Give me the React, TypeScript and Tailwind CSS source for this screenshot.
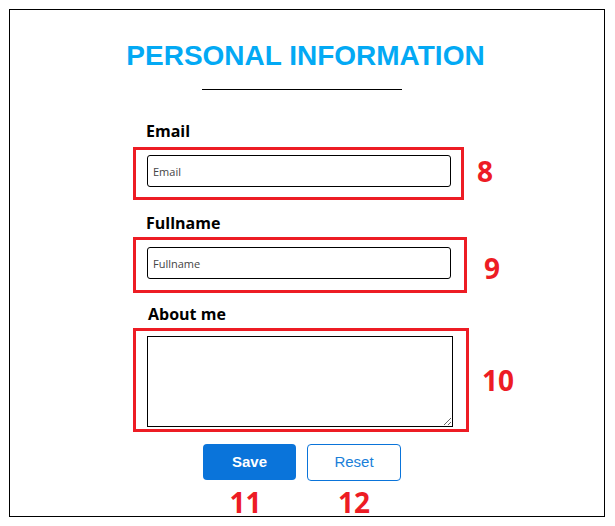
import React from "react";

const sans = { fontFamily: "'Open Sans', 'Noto Sans', sans-serif" };

function Field({
  label,
  num,
  boxW,
  boxH,
  gap,
  numPos,
  children,
  labelPad = "pl-[13px]",
}: {
  label: string;
  num: string;
  boxW: string;
  boxH: string;
  gap: string;
  numPos: string;
  children: React.ReactNode;
  labelPad?: string;
}) {
  return (
    <div className="flex flex-col">
      <div className={`${labelPad} text-[16px] font-bold leading-[22px] text-black`}>{label}</div>
      <div className={`${gap} flex items-center`}>
        <div className={`${boxW} ${boxH} border-[3px] border-[#ed1c24] pl-[11px] pt-[5px]`}>{children}</div>
        <span className={`${numPos} text-[28px] font-bold leading-none text-[#ed1c24]`}>{num}</span>
      </div>
    </div>
  );
}

export default function App() {
  return (
    <div className="w-[615px] h-[526px] bg-white pl-[9px] pt-[9px]" style={sans}>
      <div className="w-[596px] h-[508px] border border-black flex flex-col">
        <h1
          className="mt-[30px] pr-[3px] text-center text-[28px] font-bold leading-[32px] text-[#03a9f4]"
          style={{ fontFamily: "'Liberation Sans', Arial, sans-serif" }}
        >
          PERSONAL INFORMATION
        </h1>
        <div className="mt-[17px] ml-[192px] w-[200px] h-px bg-black" />

        <div className="mt-[30px] pl-[123px] flex flex-col">
          <Field label="Email" num="8" boxW="w-[331px]" boxH="h-[53px]" gap="mt-[5px]" numPos="ml-[13px] mt-[-6px]">
            <input
              placeholder="Email"
              className="w-[304px] h-[32px] border border-black rounded-[3px] px-[5px] text-[11px] text-black placeholder:text-[#444] outline-none"
            />
          </Field>
          <div className="h-[12px]" />
          <Field label="Fullname" num="9" boxW="w-[334px]" boxH="h-[56px]" gap="mt-[3px]" numPos="ml-[17px] mt-[6px]">
            <div className="pt-[2px]">
              <input
                placeholder="Fullname"
                className="w-[304px] h-[32px] border border-black rounded-[3px] px-[5px] text-[11px] text-black placeholder:text-[#444] outline-none"
              />
            </div>
          </Field>
          <div className="h-[10px]" />
          <Field
            label="About me"
            num="10"
            boxW="w-[336px]"
            boxH="h-[104px]"
            gap="mt-[3px]"
            numPos="ml-[13px] mt-0"
            labelPad="pl-[15px]"
          >
            <textarea className="block w-[306px] h-[91px] border border-black rounded-none outline-none resize-y p-1 text-[12px]" />
          </Field>
        </div>

        <div className="mt-[12px] ml-[193px] flex gap-[11px]" style={{ fontFamily: "'Liberation Sans', Arial, sans-serif" }}>
          <div className="flex flex-col items-center">
            <button className="w-[93px] h-[36px] rounded-[4px] bg-[#0a74da] text-white text-[15px] font-bold">
              Save
            </button>
            <span className="mt-[8px] mr-[8px] text-[28px] font-bold leading-[28px] text-[#ed1c24]" style={sans}>
              11
            </span>
          </div>
          <div className="flex flex-col items-center">
            <button className="w-[94px] h-[37px] rounded-[4px] border border-[#0a74da] bg-white text-[#1a7fd9] text-[15px]">
              Reset
            </button>
            <span className="mt-[7px] text-[28px] font-bold leading-[28px] text-[#ed1c24]" style={sans}>
              12
            </span>
          </div>
        </div>
      </div>
    </div>
  );
}
